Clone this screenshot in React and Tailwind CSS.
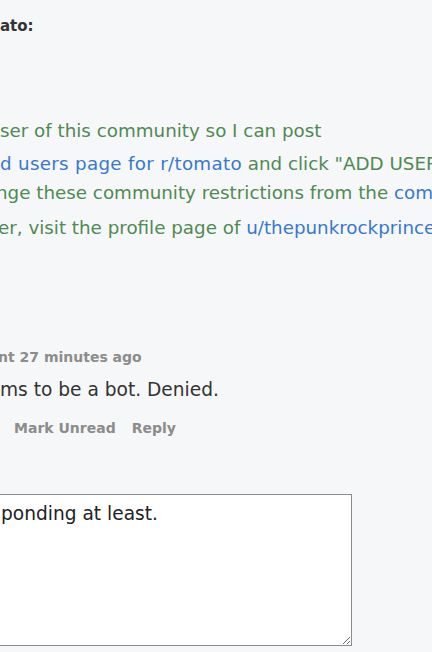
import React from "react";

const font = { fontFamily: '"DejaVu Sans", Verdana, sans-serif' };

export default function App() {
  return (
    <div
      className="h-[652px] w-[432px] overflow-hidden bg-[#f6f7f8] text-[#333]"
      style={font}
    >
      <div className="pt-[14px]">
        <div className="whitespace-nowrap text-[15px] font-bold leading-[24px] text-[#333]">
          ato:
        </div>

        <div className="mt-[78px] text-[18.3px] text-[#4f8a52]">
          <p className="whitespace-nowrap leading-[29px]">
            ser of this community so I can post
          </p>
          <p className="mt-[4px] whitespace-nowrap leading-[29px]">
            <span className="tracking-[0.3px] text-[#3778d0]">d users page for r/tomato</span> and click
            "ADD USER"
          </p>
          <p className="whitespace-nowrap leading-[29px]">
            <span className="-ml-[4px]">nge these community restrictions from the </span>
            <span className="text-[#3778d0]">community settings</span>
          </p>
          <p className="mt-[6px] whitespace-nowrap leading-[29px]">
            <span className="-ml-[2px]">er, visit the profile page of </span>
            <span className="text-[#3778d0]">u/thepunkrockprince</span>
          </p>
        </div>

        <div className="mt-[105px] whitespace-nowrap text-[14px] font-bold leading-[20px] text-[#8c8c8c]">
          <span className="-ml-[2px]">nt 27 minutes ago</span>
        </div>
        <div className="mt-[10px] whitespace-nowrap text-[18.6px] leading-[26px] text-[#333]">
          ms to be a bot. Denied.
        </div>
        <div className="mt-[15px] flex gap-[16px] whitespace-nowrap pl-[14px] text-[14px] font-bold leading-[20px] text-[#8c8c8c]">
          <span>Mark Unread</span>
          <span>Reply</span>
        </div>

        <div className="mt-[56px] -ml-[10px] w-[362px]">
          <textarea
            className="block h-[152px] w-full resize border-[1.5px] border-[#8c8c8c] bg-white pl-[10px] pt-[7px] text-[18.6px] leading-[24px] text-[#222] outline-none"
            style={font}
            defaultValue="ponding at least."
          />
        </div>
      </div>
    </div>
  );
}
